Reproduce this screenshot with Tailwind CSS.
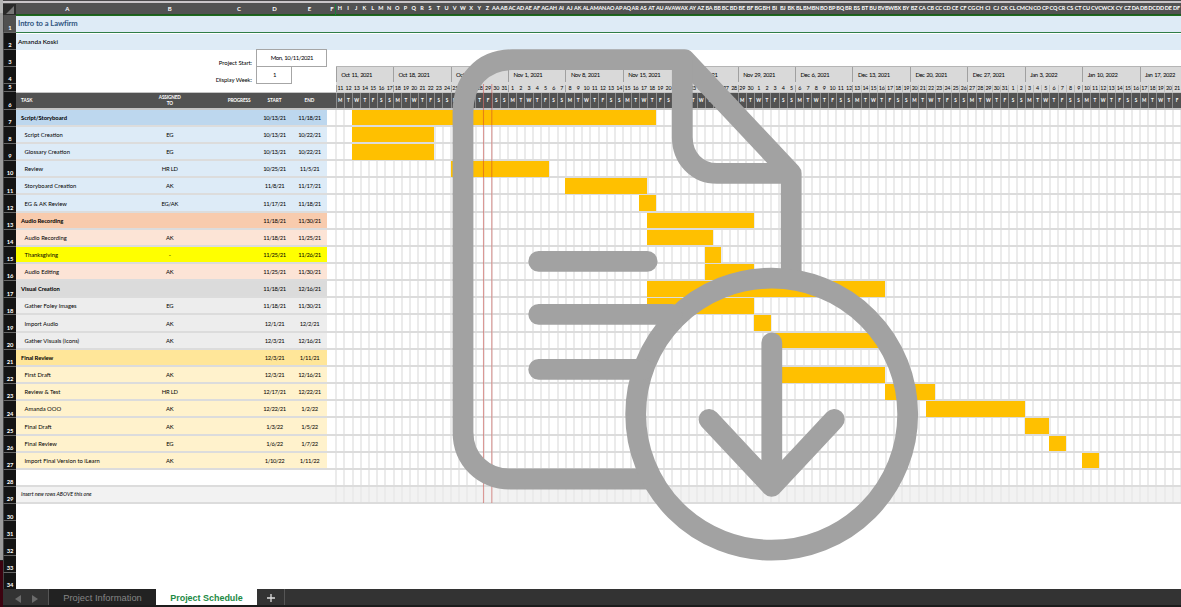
<!DOCTYPE html>
<html lang="en">
<head>
<meta charset="utf-8">
<title>Project Schedule</title>
<script src="https://cdn.jsdelivr.net/npm/@tailwindcss/browser@4"></script>
</head>
<body class="overflow-hidden bg-white">
<div class="relative flex h-[607px] w-[1181px] overflow-hidden bg-white font-['Lato','Liberation_Sans',sans-serif] text-[6px] leading-none text-black">
  <div class="flex w-[3px] shrink-0 flex-col">
    <div class="h-[13px] bg-[#b4b4b4]"></div>
    <div class="h-[547px] bg-[#9b9b9b]"></div>
    <div class="h-[1px] bg-[#222]"></div>
    <div class="flex-1 bg-[#3c0310]"></div>
  </div>
  <div class="flex w-[1178px] shrink-0 flex-col overflow-hidden">
    <div class="h-[1px] shrink-0 bg-[#4a484a]"></div>
    <div class="h-[2px] shrink-0 bg-[#c9c5c8]"></div>
    <div id="cols" class="flex h-[12px] shrink-0 items-center border-b border-[#1e5a1e] bg-[#525252] pt-px font-bold text-white">
      <div class="flex h-[11px] w-[13px] shrink-0 items-end justify-end bg-[#2a2a2a] pr-[2px] pb-[1px]"><svg width="8" height="8" viewBox="0 0 8 8"><path d="M8 0V8H0Z" fill="#777"/></svg></div>
      <div class="w-[102.5px] shrink-0 text-center">A</div>
      <div class="w-[102.5px] shrink-0 text-center">B</div>
      <div class="w-[36px] shrink-0 text-center">C</div>
      <div class="w-[35px] shrink-0 text-center">D</div>
      <div class="w-[35px] shrink-0 text-center">E</div>
      <div class="flex h-[11px] w-[8.7px] shrink-0 items-center justify-center border-r border-[#1d7a3a] pl-[2px]">F</div>
    </div>
    <div id="rows" class="flex h-[574px] shrink-0 flex-col overflow-hidden"></div>
    <div class="flex h-[18px] shrink-0 border-b-2 border-[#1c1c1c] bg-[#333] font-['Liberation_Sans',sans-serif]">
      <div class="flex w-[46px] items-center gap-[11px] border-r border-[#555] pt-[3px] pl-[12px]">
        <svg width="6" height="8" viewBox="0 0 6 8"><path d="M6 0V8L0 4Z" fill="#6b6b6b"/></svg>
        <svg width="6" height="8" viewBox="0 0 6 8"><path d="M0 0V8L6 4Z" fill="#6b6b6b"/></svg>
      </div>
      <div class="flex w-[107px] items-center justify-center bg-[#222] pt-[2px] text-[9.4px] text-[#858585]">Project Information</div>
      <div class="flex w-[101px] items-center justify-center bg-white pt-[3px] text-[8.95px] font-bold text-[#1c8a45]">Project Schedule</div>
      <div class="flex w-[28px] items-center justify-center border-r border-[#555] pt-[2px]"><svg width="8" height="8" viewBox="0 0 8 8"><path d="M4 0V8M0 4H8" stroke="#ddd" stroke-width="1.3"/></svg></div>
    </div>
  </div>

  <svg class="absolute top-0 left-0" width="1181" height="607" viewBox="0 0 1181 607" fill="none">
    <path d="M483.5 84V503M491.8 84V503" stroke="#c8322d" stroke-opacity=".45" stroke-width="1.1"/>
    <g stroke="#a2a2a2" stroke-width="20.8" stroke-linejoin="round">
      <path d="M655 479H510C484 479 463 460 463 432V112C463 82 482 59.7 512 59.7H684.5L791.2 173.4V282"/>
      <path d="M682.3 60V137C682.3 158 697 173.4 717 173.4H791"/>
      <circle cx="771.7" cy="414.2" r="136"/>
      <path d="M538.7 261.4H647.2M538.7 314.3H672M538.7 369.4H643M771.8 342.8V486M709 419.4L771.7 486.3L834.3 419.4" stroke-linecap="round"/>
    </g>
  </svg>
</div>
<script>
const DAY = 8.204, DAYS = 103;
const colName = n => (n > 26 ? String.fromCharCode(64 + Math.floor((n - 1) / 26)) : '') + String.fromCharCode(65 + (n - 1) % 26);
let cols = '';
for (let i = 0; i < DAYS; i++) cols += `<div class="flex w-[8.204px] shrink-0 justify-center text-[5.5px] tracking-[-0.15px]"><span>${colName(i + 8)}</span></div>`;
document.getElementById('cols').insertAdjacentHTML('beforeend', cols);

const start = Date.UTC(2021, 9, 11);
const date = i => new Date(start + i * 864e5);
const num = (n, bg = 'bg-[#141414]') => `<div class="flex w-[13px] shrink-0 items-end justify-center border-b border-l border-[#666] border-l-[#444] ${bg} pb-px text-[5.8px] font-bold text-white">${n}</div>`;

let html = '';
html += `<div class="flex h-[18px] shrink-0">${num(1, 'bg-[#505050]')}<div class="flex flex-1 items-center border-t border-b border-t-[#1e6b1e] border-b-[#2f7d48] bg-[#deebf6] pl-[2px] text-[7.6px] font-bold tracking-[-0.05px] text-[#2e5480]">Intro to a Lawfirm</div></div>`;
html += `<div class="flex h-[17px] shrink-0">${num(2)}<div class="flex flex-1 items-center border-t border-white bg-[#deebf6] pl-[2px] text-[6.4px] font-medium">Amanda Koski</div></div>`;

let weeks = '';
for (let w = 0; w < 15; w++) {
  const d = date(w * 7);
  weeks += `<div class="flex w-[57.428px] shrink-0 items-center overflow-hidden border-l border-[#a0a0a0] pl-[4.5px] whitespace-nowrap">${d.toLocaleDateString('en-US', { month: 'short', day: 'numeric', year: 'numeric', timeZone: 'UTC' })}</div>`;
}
let nums = '', letters = '';
for (let i = 0; i < DAYS; i++) {
  const d = date(i);
  const edge = i % 7 === 0 ? 'border-[#a0a0a0]' : (i > 62 ? 'border-[#bdbdbd]' : 'border-transparent');
  nums += `<div class="flex w-[8.204px] shrink-0 items-center justify-center border-l ${edge}"><span>${d.getUTCDate()}</span></div>`;
  letters += `<div class="flex w-[8.204px] shrink-0 items-center justify-center border-l border-[#8c8c8c]">${'SMTWTFS'[d.getUTCDay()]}</div>`;
}
html += `<div class="flex h-[34px] shrink-0">
  <div class="flex flex-col"><div class="flex h-[17px]">${num(3)}</div><div class="flex h-[17px]">${num(4)}</div></div>
  <div class="flex w-[240.4px] shrink-0 flex-col items-end pr-[4.4px] text-[6px] tracking-[-0.08px]"><div class="flex h-[17px] items-end pb-px">Project Start:</div><div class="flex h-[17px] items-end pb-px">Display Week:</div></div>
  <div class="-mt-px flex w-[79.3px] shrink-0 flex-col text-[6px] tracking-[-0.45px] [word-spacing:0.8px]">
    <div class="flex h-[18px] w-[71px] items-center justify-center border border-[#a6a6a6]">Mon, 10/11/2021</div>
    <div class="-mt-px flex h-[18px] w-[36px] items-center justify-center border border-[#a6a6a6]">1</div>
  </div>
  <div class="flex flex-col pt-[16px]"><div class="flex h-[18px] border-t border-[#b5b5b5] bg-[#d9d9d9] pb-[2px] text-[5.9px] tracking-[-0.43px] [word-spacing:0.8px]">${weeks}</div></div>
</div>`;
html += `<div class="flex h-[8px] shrink-0">${num(5)}<div class="w-[319.7px] shrink-0"></div><div class="flex bg-[#d9d9d9] pt-px text-[5.4px] tracking-[-0.25px]">${nums}</div></div>`;
html += `<div class="flex h-[17.6px] shrink-0">${num(6)}<div class="flex items-center border-t border-b-2 border-[#c4c4c4] bg-[#525252] text-[4.7px] font-bold text-white">
  <div class="w-[102.5px] shrink-0 pl-[5px]">TASK</div><div class="w-[102.5px] shrink-0 text-center leading-[6.4px] tracking-[-0.15px]">ASSIGNED<br>TO</div><div class="w-[36px] shrink-0 text-center tracking-[-0.15px]">PROGRESS</div><div class="w-[35px] shrink-0 text-center">START</div><div class="w-[35px] shrink-0 text-center">END</div><div class="w-[8.7px] shrink-0"></div>
  <div class="flex self-stretch text-[4.6px]">${letters}</div></div></div>`;

/* name, assignee, start, end, background, bar offset in days, bar length */
const T = [
  ['Script/Storyboard', '', '10/13/21', '11/18/21', 'bg-[#bdd7ee]', 2, 37, 1],
  ['Script Creation', 'EG', '10/13/21', '10/22/21', 'bg-[#ddebf7]', 2, 10],
  ['Glossary Creation', 'EG', '10/13/21', '10/22/21', 'bg-[#ddebf7]', 2, 10],
  ['Review', 'HR LD', '10/25/21', '11/5/21', 'bg-[#ddebf7]', 14, 12],
  ['Storyboard Creation', 'AK', '11/8/21', '11/17/21', 'bg-[#ddebf7]', 28, 10],
  ['EG &amp; AK Review', 'EG/AK', '11/17/21', '11/18/21', 'bg-[#ddebf7]', 37, 2],
  ['Audio Recording', '', '11/18/21', '11/30/21', 'bg-[#f8cbad]', 38, 13, 1],
  ['Audio Recording', 'AK', '11/18/21', '11/25/21', 'bg-[#fce4d6]', 38, 8],
  ['Thanksgiving', '-', '11/25/21', '11/26/21', 'bg-[#ffff00]', 45, 2],
  ['Audio Editing', 'AK', '11/25/21', '11/30/21', 'bg-[#fce4d6]', 45, 6],
  ['Visual Creation', '', '11/18/21', '12/16/21', 'bg-[#dbdbdb]', 38, 29, 1],
  ['Gather Foley Images', 'EG', '11/18/21', '11/30/21', 'bg-[#ededed]', 38, 13],
  ['Import Audio', 'AK', '12/1/21', '12/2/21', 'bg-[#ededed]', 51, 2],
  ['Gather Visuals (Icons)', 'AK', '12/3/21', '12/16/21', 'bg-[#ededed]', 53, 14],
  ['Final Review', '', '12/3/21', '1/11/21', 'bg-[#ffe699]', 0, 0, 1],
  ['First Draft', 'AK', '12/3/21', '12/16/21', 'bg-[#fff2cc]', 53, 14],
  ['Review &amp; Test', 'HR LD', '12/17/21', '12/22/21', 'bg-[#fff2cc]', 67, 6],
  ['Amanda OOO', 'AK', '12/22/21', '1/2/22', 'bg-[#fff2cc]', 72, 12],
  ['Final Draft', 'AK', '1/3/22', '1/5/22', 'bg-[#fff2cc]', 84, 3],
  ['Final Review', 'EG', '1/6/22', '1/7/22', 'bg-[#fff2cc]', 87, 2],
  ['Import Final Version to iLearn', 'AK', '1/10/22', '1/11/22', 'bg-[#fff2cc]', 91, 2],
  ['', '', '', '', 'bg-white', 0, 0],
  ['Insert new rows ABOVE this one', '', '', '', 'bg-[#f2f2f2]', 0, 0, 2],
];
const cell = '<div class="w-[8.204px] shrink-0 border-l-2 border-[#ebebeb]"></div>'.repeat(DAYS + 1);
T.forEach((t, i) => {
  const style = t[7] === 1 ? 'pl-[5px] font-bold tracking-[-0.05px]' : t[7] === 2 ? 'pl-[5px] italic text-[5.3px]' : 'pl-[8.5px]';
  const bar = t[6] ? `<div class="absolute top-0 -bottom-[0.5px] bg-[#ffc000]" style="left:${t[5] * DAY + .6}px;width:${t[6] * DAY}px"></div>` : '';
  const grey = t[7] === 2 ? 'bg-[#f2f2f2]' : '';
  html += `<div class="flex h-[17.16px] shrink-0">${num(i + 7)}<div class="flex border-b-2 border-[#dcdcdc] ${grey}">
    <div class="flex w-[311px] shrink-0 items-center pt-px text-[5.85px] ${t[4]}">
      <div class="w-[102.5px] shrink-0 whitespace-nowrap ${style}">${t[0]}</div><div class="w-[102.5px] shrink-0 text-center tracking-[-0.2px]">${t[1]}</div><div class="w-[36px] shrink-0"></div><div class="w-[35px] shrink-0 text-center tracking-[-0.38px]">${t[2]}</div><div class="w-[35px] shrink-0 text-center tracking-[-0.38px]">${t[3]}</div>
    </div>
    <div class="w-[8.1px] shrink-0"></div>
    <div class="relative flex">${cell}${bar}</div>
  </div></div>`;
});
for (let n = 30; n <= 34; n++) html += `<div class="flex h-[17.16px] shrink-0">${num(n)}</div>`;
document.getElementById('rows').innerHTML = html;
</script>
</body>
</html>
